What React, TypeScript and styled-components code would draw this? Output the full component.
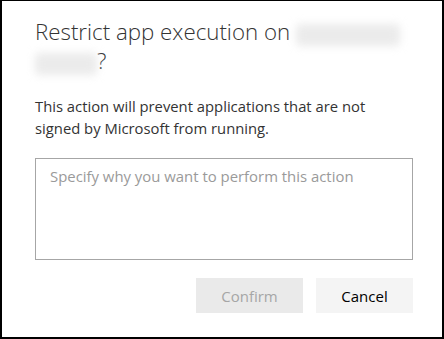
import React from 'react';
import styled, { createGlobalStyle } from 'styled-components';

const GlobalStyle = createGlobalStyle`
  html, body {
    margin: 0;
    padding: 0;
    background: #fff;
  }
  body {
    font-family: "Open Sans", "Noto Sans", sans-serif;
  }
`;

const Dialog = styled.div`
  box-sizing: border-box;
  width: 444px;
  height: 339px;
  border-style: solid;
  border-color: #000;
  border-width: 1px 2px 2px 2px;
  background: #fff;
  padding: 16px 30px 0 33px;
  display: flex;
  flex-direction: column;
`;

const Title = styled.h2`
  margin: 0;
  font-family: "Open Sans", sans-serif;
  font-weight: 300;
  font-size: 22.3px;
  line-height: 29px;
  color: #333;
`;

// blurred-out device name
const Redacted = styled.span<{ $w: number }>`
  display: inline-block;
  width: ${(p) => p.$w}px;
  height: 22px;
  vertical-align: -6px;
  background: #ebebeb;
  filter: blur(4px);
  border-radius: 4px;
`;

const Message = styled.p`
  margin: 20px 0 0;
  font-size: 14.8px;
  line-height: 22px;
  color: #333;
`;

const Reason = styled.textarea`
  box-sizing: border-box;
  margin-top: 19px;
  width: 378px;
  height: 102px;
  border: 1px solid #a6a6a6;
  padding: 7px 14px;
  resize: none;
  font-family: "Open Sans", sans-serif;
  font-size: 14.9px;
  color: #333;
  &::placeholder {
    color: #9a9a9a;
  }
`;

const Actions = styled.div`
  display: flex;
  justify-content: flex-end;
  gap: 13px;
  margin-top: 18px;
  width: 378px;
`;

const Button = styled.button<{ $w: number; $disabled?: boolean }>`
  width: ${(p) => p.$w}px;
  height: 35px;
  border: none;
  padding: 0;
  font-family: "Open Sans", sans-serif;
  font-size: 15px;
  background: ${(p) => (p.$disabled ? '#eaeaea' : '#f4f4f4')};
  color: ${(p) => (p.$disabled ? '#a6a6a6' : '#000')};
  cursor: ${(p) => (p.$disabled ? 'default' : 'pointer')};
`;

export default function App() {
  return (
    <>
      <GlobalStyle />
      <Dialog>
        <Title>
          Restrict app execution on <Redacted $w={104} />
          <br />
          <Redacted $w={62} />?
        </Title>
        <Message>
          This action will prevent applications that are not
          <br />
          signed by Microsoft from running.
        </Message>
        <Reason placeholder="Specify why you want to perform this action" />
        <Actions>
          <Button $w={107} $disabled>Confirm</Button>
          <Button $w={97}>Cancel</Button>
        </Actions>
      </Dialog>
    </>
  );
}
